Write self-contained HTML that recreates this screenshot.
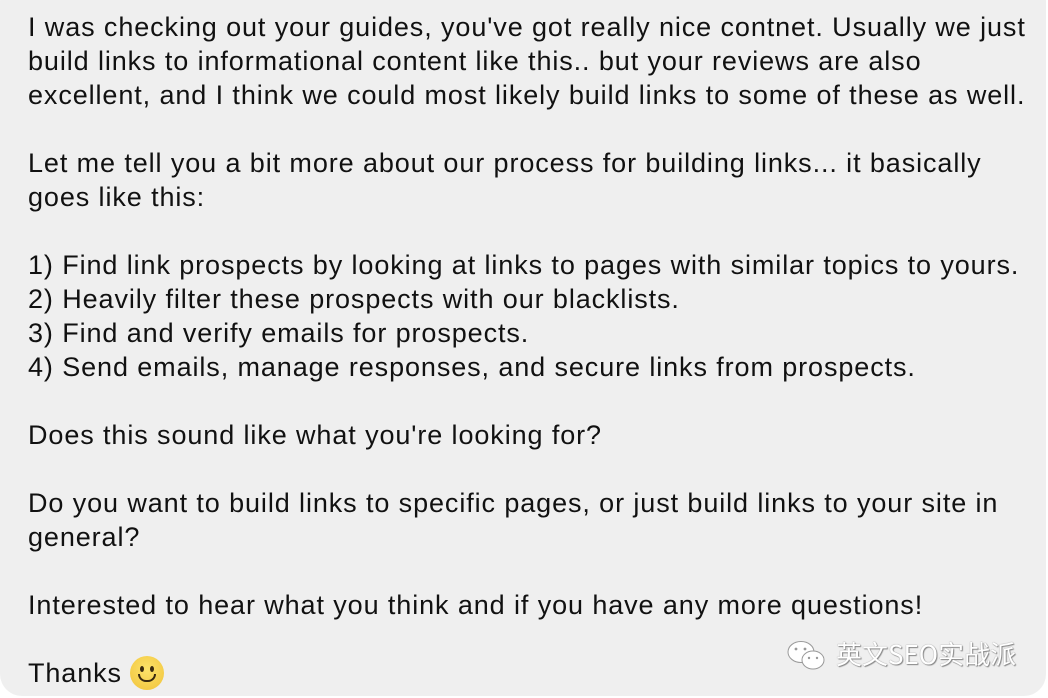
<!DOCTYPE html>
<html><head><meta charset="utf-8"><style>
html,body{margin:0;padding:0;background:#fff;}
body{width:1048px;height:698px;overflow:hidden;position:relative;}
.b{position:absolute;left:0;top:-20px;width:1046px;height:716px;background:#efefef;border-radius:22px;}
.t{position:absolute;left:28px;top:10px;font-family:"Liberation Sans",Arial,sans-serif;font-size:27px;letter-spacing:0.9px;line-height:34px;color:#111;white-space:pre;}
.e{display:inline-block;width:34px;height:34px;border-radius:50%;background:radial-gradient(circle at 50% 40%,#fde36a,#f0c23a);vertical-align:-8px;position:relative;margin-left:0px;}
.e:before,.e:after{content:"";position:absolute;top:10px;width:4px;height:6px;border-radius:50%;background:#3a2a10;}
.e:before{left:10px}.e:after{right:10px}
.m{position:absolute;left:8px;top:18px;width:14px;height:6px;border:2.5px solid #3a2a10;border-top:none;border-radius:0 0 10px 10px;}
.w{position:absolute;left:836px;top:635px;font-family:"Noto Sans CJK SC",sans-serif;font-size:26px;color:#fff;text-shadow:0 0 1px #777,1px 1px 1px #888;letter-spacing:0px;}
.ic{position:absolute;left:786px;top:639px;}
</style></head><body>
<div class="b"></div>
<div class="t">I was checking out your guides, you've got really nice contnet. Usually we just
build links to informational content like this.. but your reviews are also
excellent, and I think we could most likely build links to some of these as well.

Let me tell you a bit more about our process for building links... it basically
goes like this:

1) Find link prospects by looking at links to pages with similar topics to yours.
2) Heavily filter these prospects with our blacklists.
3) Find and verify emails for prospects.
4) Send emails, manage responses, and secure links from prospects.

Does this sound like what you're looking for?

Do you want to build links to specific pages, or just build links to your site in
general?

Interested to hear what you think and if you have any more questions!

Thanks <span class="e"><span class="m"></span></span></div>
<svg class="ic" width="44" height="34" viewBox="0 0 44 34">
<ellipse cx="15" cy="13" rx="13" ry="10.5" fill="#fff" stroke="#999" stroke-width="1"/>
<ellipse cx="27" cy="21" rx="11" ry="9" fill="#fff" stroke="#999" stroke-width="1"/>
<circle cx="10" cy="10" r="1.4" fill="#999"/><circle cx="19" cy="10" r="1.4" fill="#999"/>
<circle cx="23" cy="19" r="1.2" fill="#999"/><circle cx="31" cy="19" r="1.2" fill="#999"/>
</svg>
<div class="w">英文SEO实战派</div>
</body></html>
